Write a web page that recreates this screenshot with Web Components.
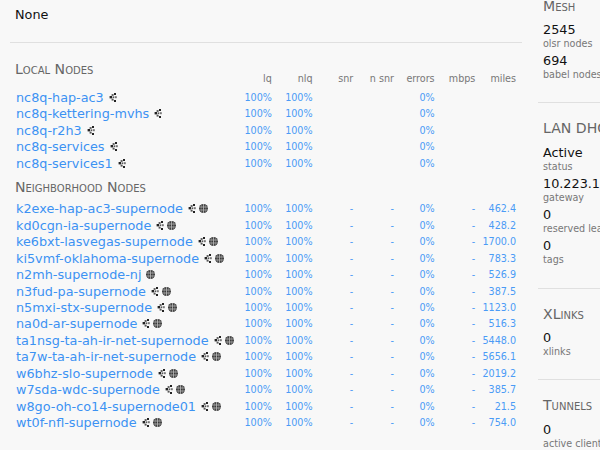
<!DOCTYPE html>
<html>
<head>
<meta charset="utf-8">
<style>
  html, body { margin: 0; height: 450px; overflow: hidden; background: #f8f8f8; }
  body { font-family: "DejaVu Sans", sans-serif; }
</style>
</head>
<body>
<status-page>
  <main-head>None</main-head>
  <node-section title="Local Nodes" columns>
    <node-row name="nc8q-hap-ac3" mesh errors="0%"></node-row>
    <node-row name="nc8q-kettering-mvhs" mesh errors="0%"></node-row>
    <node-row name="nc8q-r2h3" mesh errors="0%"></node-row>
    <node-row name="nc8q-services" mesh errors="0%"></node-row>
    <node-row name="nc8q-services1" mesh errors="0%"></node-row>
  </node-section>
  <node-section title="Neighborhood Nodes" class="hood">
    <node-row name="k2exe-hap-ac3-supernode" mesh globe miles="462.4"></node-row>
    <node-row name="kd0cgn-ia-supernode" mesh globe miles="428.2"></node-row>
    <node-row name="ke6bxt-lasvegas-supernode" mesh globe miles="1700.0"></node-row>
    <node-row name="ki5vmf-oklahoma-supernode" mesh globe miles="783.3"></node-row>
    <node-row name="n2mh-supernode-nj" globe miles="526.9"></node-row>
    <node-row name="n3fud-pa-supernode" mesh globe miles="387.5"></node-row>
    <node-row name="n5mxi-stx-supernode" mesh globe miles="1123.0"></node-row>
    <node-row name="na0d-ar-supernode" mesh globe miles="516.3"></node-row>
    <node-row name="ta1nsg-ta-ah-ir-net-supernode" mesh globe miles="5448.0"></node-row>
    <node-row name="ta7w-ta-ah-ir-net-supernode" mesh globe miles="5656.1"></node-row>
    <node-row name="w6bhz-slo-supernode" mesh globe miles="2019.2"></node-row>
    <node-row name="w7sda-wdc-supernode" mesh globe miles="385.7"></node-row>
    <node-row name="w8go-oh-co14-supernode01" mesh globe miles="21.5"></node-row>
    <node-row name="wt0f-nfl-supernode" mesh globe miles="754.0"></node-row>
  </node-section>

  <side-block slot="side" title="Mesh" style="margin-top:-19.5px">
    <side-stat value="2545" label="olsr nodes"></side-stat>
    <side-stat value="694" label="babel nodes"></side-stat>
  </side-block>
  <side-block slot="side" title="LAN DHCP" style="padding-bottom:20px">
    <side-stat value="Active" label="status"></side-stat>
    <side-stat value="10.223.1" label="gateway"></side-stat>
    <side-stat value="0" label="reserved leases"></side-stat>
    <side-stat value="0" label="tags"></side-stat>
  </side-block>
  <side-block slot="side" title="XLinks">
    <side-stat value="0" label="xlinks"></side-stat>
  </side-block>
  <side-block slot="side" title="Tunnels" last>
    <side-stat value="0" label="active clients"></side-stat>
  </side-block>
</status-page>

<script>
const MESH_ICON = `<svg class="mesh" width="8" height="9" viewBox="0 0 8 9" fill="#222">
  <rect x="5" y="0" width="2" height="2"/><rect x="2.6" y="1" width="2" height="2" fill="#666"/>
  <rect x="0.6" y="3" width="2.4" height="2.4"/><rect x="3.6" y="3.4" width="1.6" height="1.6" fill="#555"/>
  <rect x="5.8" y="3.2" width="2" height="2" fill="#777"/>
  <rect x="2.6" y="5.6" width="2" height="2" fill="#555"/><rect x="5" y="7" width="2" height="2"/>
</svg>`;

const GLOBE_ICON = `<svg class="globe" width="9" height="9" viewBox="0 0 9 9">
  <circle cx="4.5" cy="4.5" r="4.5" fill="#3a3a3a"/>
  <path d="M0 3H9M0 6H9M4.5 0V9" stroke="#bbb" stroke-width=".8" fill="none"/>
  <path d="M2.8 .5Q1.6 4.5 2.8 8.5M6.2 .5Q7.4 4.5 6.2 8.5" stroke="#999" stroke-width=".6" fill="none"/>
</svg>`;

class StatusPage extends HTMLElement {
  constructor() {
    super();
    this.attachShadow({ mode: 'open' }).innerHTML = `
      <style>
        :host { display: flex; width: 700px; height: 450px; overflow: hidden; color: #111; }
        .main { flex: none; width: 512px; margin-left: 10px; }
        .side { flex: none; width: 160px; margin-left: 16px; }
      </style>
      <div class="main"><slot></slot></div>
      <div class="side"><slot name="side"></slot></div>
    `;
  }
}

class MainHead extends HTMLElement {
  constructor() {
    super();
    this.attachShadow({ mode: 'open' }).innerHTML = `
      <style>
        :host { display: block; height: 42px; padding-left: 5px;
          border-bottom: 1px solid #e0e0e0; font-size: 12.8px; line-height: 30px; }
      </style>
      <slot></slot>
    `;
  }
}

const COLUMNS = ['lq', 'nlq', 'snr', 'n snr', 'errors', 'mbps', 'miles'];

class NodeSection extends HTMLElement {
  constructor() {
    super();
    const heads = this.hasAttribute('columns')
      ? `<div class="cols"><span></span>${COLUMNS.map(c => `<span>${c}</span>`).join('')}</div>`
      : '';
    this.attachShadow({ mode: 'open' }).innerHTML = `
      <style>
        :host { display: block; padding: 0 6px 0 5px; }
        :host(.hood) { margin-top: 8px; }
        :host([columns]) { margin-top: 18px; }
        h3 { margin: 0; font-size: 14.1px; line-height: 16px; font-weight: normal;
          font-variant: small-caps; color: #666; }
        .cols { display: grid; grid-template-columns: minmax(0, 1fr) repeat(7, 40.7px); margin-top: -4px;
          font-size: 9.6px; line-height: 12px; color: #777; text-align: right; height: 16.3px; }
        :host(.hood) .list { margin-top: 5.2px; }
        .list { margin-left: 1px; }
      </style>
      <h3>${this.getAttribute('title')}</h3>
      ${heads}
      <div class="list"><slot></slot></div>
    `;
  }
}

class NodeRow extends HTMLElement {
  constructor() {
    super();
    const miles = this.getAttribute('miles');
    const dash = miles ? '-' : '';
    this.attachShadow({ mode: 'open' }).innerHTML = `
      <style>
        :host { display: grid; grid-template-columns: minmax(0, 1fr) repeat(7, 40.7px); height: 16.45px;
          align-items: center; font-size: 9.6px; color: #4a9bf6; text-align: right; }
        .name { display: flex; align-items: center; text-align: left; font-size: 12.8px;
          color: #3c92f3; white-space: nowrap; }
        svg { flex: none; margin-left: 5px; }
        svg.mesh + svg.globe { margin-left: 3px; }
      </style>
      <div class="name">${this.getAttribute('name')}${this.hasAttribute('mesh') ? MESH_ICON : ''}${this.hasAttribute('globe') ? GLOBE_ICON : ''}</div>
      <span>100%</span><span>100%</span><span>${dash}</span><span>${dash}</span>
      <span>0%</span><span>${dash}</span><span>${miles || ''}</span>
    `;
  }
}

class SideBlock extends HTMLElement {
  constructor() {
    super();
    this.attachShadow({ mode: 'open' }).innerHTML = `
      <style>
        :host { display: block; padding: 17px 0 19px 5px; border-bottom: 1px solid #e0e0e0; }
        :host([last]) { border-bottom: 0; }
        h3 { margin: 0; font-size: 14.1px; line-height: 16px; font-weight: normal;
          font-variant: small-caps; color: #666; }
        .body { margin-top: 7.5px; }
      </style>
      <h3>${this.getAttribute('title')}</h3>
      <div class="body"><slot></slot></div>
    `;
  }
}

class SideStat extends HTMLElement {
  constructor() {
    super();
    this.attachShadow({ mode: 'open' }).innerHTML = `
      <style>
        :host { display: block; height: 31px; white-space: nowrap; }
        .v { font-size: 12.8px; line-height: 17px; color: #111; }
        .l { font-size: 9.6px; line-height: 12px; color: #777; }
      </style>
      <div class="v">${this.getAttribute('value')}</div>
      <div class="l">${this.getAttribute('label')}</div>
    `;
  }
}

customElements.define('status-page', StatusPage);
customElements.define('main-head', MainHead);
customElements.define('node-section', NodeSection);
customElements.define('node-row', NodeRow);
customElements.define('side-block', SideBlock);
customElements.define('side-stat', SideStat);
</script>
</body>
</html>
